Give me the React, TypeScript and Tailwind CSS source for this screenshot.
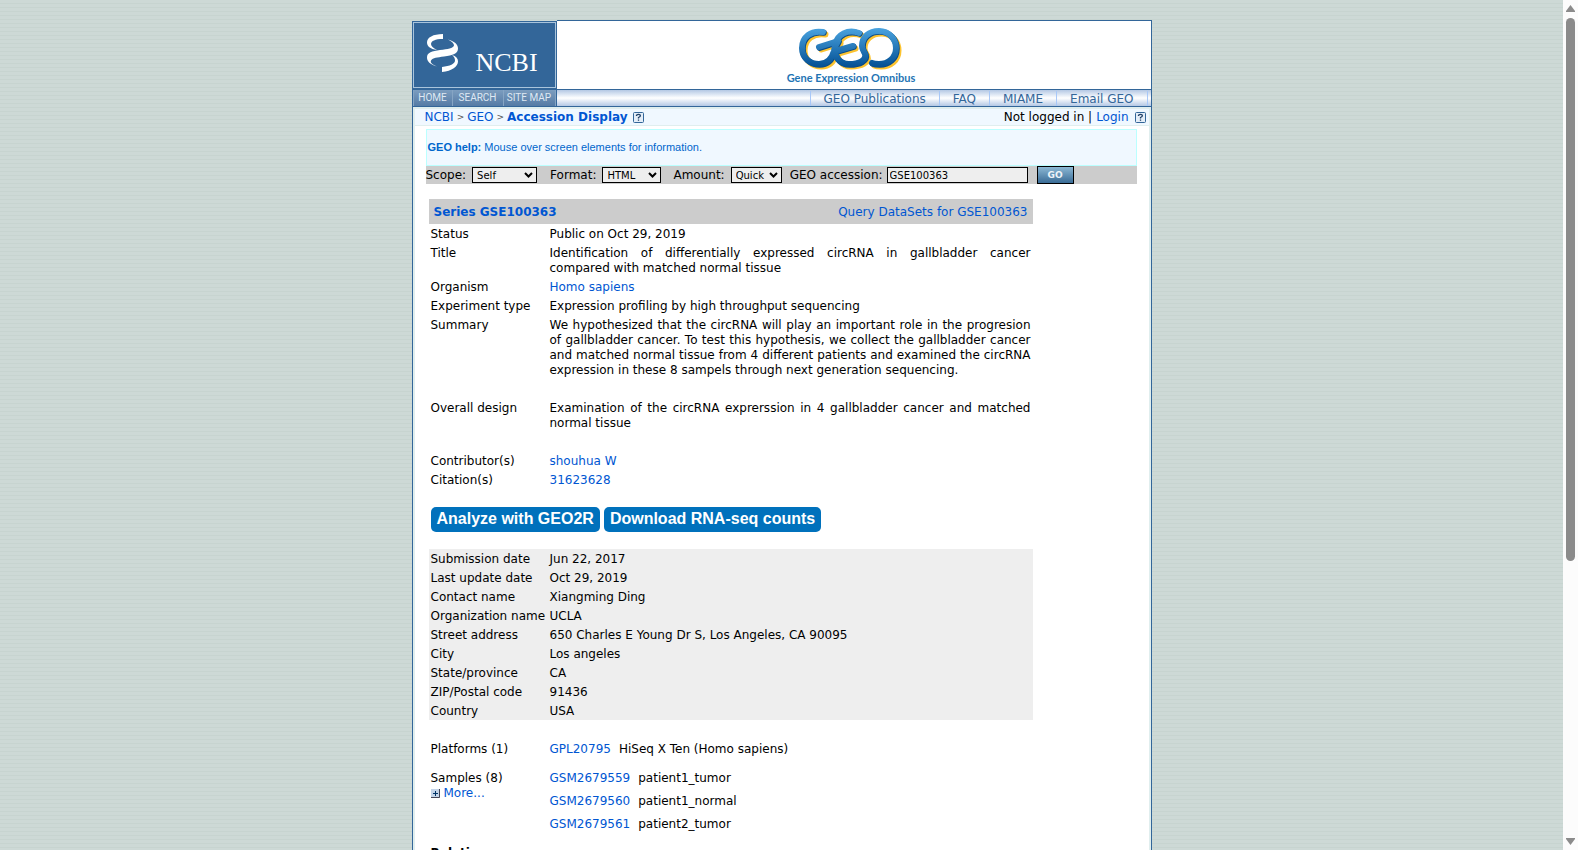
import React from "react";

const link = "text-[#0056d2] hover:underline";

const SERIES_ROWS: { label: string; value: React.ReactNode; gap?: boolean }[] = [
  { label: "Status", value: "Public on Oct 29, 2019" },
  { label: "Title", value: "Identification of differentially expressed circRNA in gallbladder cancer compared with matched normal tissue" },
  { label: "Organism", value: <a href="#organism" className={link}>Homo sapiens</a> },
  { label: "Experiment type", value: "Expression profiling by high throughput sequencing" },
  {
    label: "Summary",
    value: "We hypothesized that the circRNA will play an important role in the progresion of gallbladder cancer. To test this hypothesis, we collect the gallbladder cancer and matched normal tissue from 4 different patients and examined the circRNA expression in these 8 sampels through next generation sequencing.",
    gap: true,
  },
  { label: "Overall design", value: "Examination of the circRNA exprerssion in 4 gallbladder cancer and matched normal tissue", gap: true },
  { label: "Contributor(s)", value: <a href="#contributor" className={link}>shouhua W</a> },
  { label: "Citation(s)", value: <a href="#citation" className={link}>31623628</a> },
];

const CONTACT_ROWS = [
  ["Submission date", "Jun 22, 2017"],
  ["Last update date", "Oct 29, 2019"],
  ["Contact name", "Xiangming Ding"],
  ["Organization name", "UCLA"],
  ["Street address", "650 Charles E Young Dr S, Los Angeles, CA 90095"],
  ["City", "Los angeles"],
  ["State/province", "CA"],
  ["ZIP/Postal code", "91436"],
  ["Country", "USA"],
];

const SAMPLES = [
  ["GSM2679559", "patient1_tumor"],
  ["GSM2679560", "patient1_normal"],
  ["GSM2679561", "patient2_tumor"],
];

function HelpIcon() {
  return (
    <svg width="11" height="11" viewBox="0 0 11 11" className="shrink-0">
      <rect x="0.5" y="0.5" width="10" height="10" rx="1" fill="#e4eef8" stroke="#336699" />
      <path d="M3.5 4V3.4Q3.6 2.4 5.5 2.4T7.4 3.8Q7.4 4.8 5.5 5.5V6.6M5.5 7.6V8.8" fill="none" stroke="#1f3f66" strokeWidth="1.3" />
    </svg>
  );
}

function HelixMark() {
  return (
    <svg width="33" height="38" viewBox="0 0 33 38" fill="#fff" className="mb-1">
      <path d="M17 0v5C9 5 5 7 5 10c0 2 2 4 6 6C4 15 1 12 1 8.500 1 3.500 7 0 17 0z" />
      <path d="M22 5.500c7 2 10 5 10 9 0 5-5 7-14 8-7 1-11 1-13 4-1 2 1 4 6 6-7-2-10-5-10-9 0-5 5-6.500 13-7.500 8-1 13-1.500 14-4.500 0-2-2-4-6-6z" />
      <path d="M26 21c4 1 6 3.500 6 6.500 0 5-6 9.500-16 10.500v-5c8-1 13-3 13-6.500 0-2-1-4-3-5.500z" />
    </svg>
  );
}

function GeoLetters() {
  return (
    <>
      <path d="M24 4C12 2 3 9 3 20C3 30 11 36 20 36C29 36 33 30 35 23C36 19 37 16 39 13L20 19" />
      <path d="M60 5C49 1 38 6 36 17C34 28 40 36 50 36C60 36 68 32 66 26C65 23 63 22 63 18C63 9 70 3 80 3C90 3 97 11 97 20C97 30 89 36 80 36C77 36 75 36 73 35" />
      <path d="M37 23L54 18" />
    </>
  );
}

function GeoLogo() {
  return (
    <svg width="140" height="58" viewBox="0 0 140 58" role="img" aria-label="GEO">
      <defs>
        <linearGradient id="geo" gradientUnits="userSpaceOnUse" x1="0" y1="0" x2="0" y2="38">
          <stop offset="0" stopColor="#4aa3df" />
          <stop offset="1" stopColor="#055296" />
        </linearGradient>
      </defs>
      <g transform="translate(18 1)" fill="none" strokeWidth="6" strokeLinecap="round" strokeLinejoin="round">
        <g transform="translate(2.500 2.500)" stroke="#fcc32f"><GeoLetters /></g>
        <g transform="translate(0.800 0.800)" stroke="#0a4a85"><GeoLetters /></g>
        <g stroke="url(#geo)"><GeoLetters /></g>
      </g>
      <text x="70" y="55" textAnchor="middle" fontFamily="Lato, sans-serif" fontSize="11" fontWeight="700" fill="#1f74b4">
        Gene Expression Omnibus
      </text>
    </svg>
  );
}

function Select({ id, label, value, width }: { id: string; label: string; value: string; width: string }) {
  return (
    <div className="flex items-center gap-1.5">
      <label htmlFor={id}>{label}</label>
      <div className="relative flex">
        <select id={id} className={`h-4 appearance-none border border-black bg-[#eee] pl-1 pt-px text-[10px] leading-3 text-black ${width}`}>
          <option>{value}</option>
        </select>
        <svg width="9" height="6" viewBox="0 0 9 6" className="pointer-events-none absolute right-1 top-[5px]">
          <path d="M1 1l3.500 3.500L8 1" fill="none" stroke="#000" strokeWidth="2" />
        </svg>
      </div>
    </div>
  );
}

function Header() {
  return (
    <header>
      <div className="flex">
        <div className="mt-px w-[145px] border border-[#336699] bg-[#336699]">
          <a href="#ncbi" className="flex h-[66px] items-center gap-[17px] border border-[#a9c4dc] pl-3 text-white">
            <HelixMark />
            <span className="mt-4 font-['Liberation_Serif',serif] text-[26px] leading-7">NCBI</span>
          </a>
        </div>
        <div className="flex h-[70px] flex-1 justify-center border-t border-r border-b border-[#336699] bg-white pr-1.5 pt-1.5">
          <a href="#geo"><GeoLogo /></a>
        </div>
      </div>
      <div className="flex h-[17px] border-b border-[#336699]">
        <nav className="flex w-[145px] border-x border-[#336699] bg-linear-to-b from-[#7c9dbf] to-[#557ba5] font-[Roboto,sans-serif] text-[10px] leading-4 text-[#dfe9f3]">
          <a href="#home" className="flex-1 border-l border-[#86a5c4] text-center">HOME</a>
          <a href="#search" className="w-13 border-x border-[#86a5c4] text-center">SEARCH</a>
          <a href="#map" className="w-13 border-r border-[#86a5c4] text-center">SITE MAP</a>
        </nav>
        <nav className="flex flex-1 justify-end border-r border-[#336699] bg-linear-to-b from-[#b4c8e4] via-white to-[#b4c8e4] pt-px leading-4 text-[#336699]">
          <a href="#pubs" className="border-l border-[#a8c8f8] px-[13px]">GEO Publications</a>
          <a href="#faq" className="border-l border-[#a8c8f8] px-[13px]">FAQ</a>
          <a href="#miame" className="border-l border-[#a8c8f8] px-[13px]">MIAME</a>
          <a href="#email" className="border-x border-[#a8c8f8] px-[13px]">Email GEO</a>
          <span className="w-[3px]" />
        </nav>
      </div>
    </header>
  );
}

export default function App() {
  return (
    <div className="flex h-screen overflow-hidden bg-[repeating-linear-gradient(to_bottom,#cdd9d6_0px,#cdd9d6_3px,#c7d4d0_3px,#c7d4d0_4px)] font-['DejaVu_Sans',Verdana,sans-serif] text-xs leading-[15px] text-black">
      <main className="flex-1 overflow-hidden pt-5">
        <div className="mx-auto w-[740px]">
          <Header />
          <div className="border-x border-[#336699] bg-white">
            <div className="border-2 border-b-0 border-[#e0eeee]">
              <div className="flex h-[17px] items-end justify-between border-b border-[#e0eeee] bg-[#f0f8ff] pl-2.5 pr-[3px]">
                <div className="flex items-center gap-[3px]">
                  <a href="#ncbi" className={link}>NCBI</a>
                  <span className="text-[9px] text-[#555]">&gt;</span>
                  <a href="#geo" className={link}>GEO</a>
                  <span className="text-[9px] text-[#555]">&gt;</span>
                  <a href="#acc" className={`mr-0.5 font-bold ${link}`}>Accession Display</a>
                  <HelpIcon />
                </div>
                <div className="flex items-center gap-1">
                  <span>Not logged in |</span>
                  <a href="#login" className={`mr-0.5 ${link}`}>Login</a>
                  <HelpIcon />
                </div>
              </div>

              <div className="ml-[11px] mr-3 mt-[3px]">
                <div className="flex h-[37px] items-center border border-[#bff] bg-[#f0f8ff] pl-px font-['Liberation_Sans',sans-serif] text-[11px] text-[#0066cc]">
                  <p><b>GEO help:</b> Mouse over screen elements for information.</p>
                </div>
                <form className="flex h-[18px] items-center bg-[#ccc]">
                  <Select id="scope" label="Scope:" value="Self" width="w-[65px]" />
                  <span className="w-[13px]" />
                  <Select id="format" label="Format:" value="HTML" width="w-[59px]" />
                  <span className="w-3" />
                  <Select id="amount" label="Amount:" value="Quick" width="w-[51px]" />
                  <label htmlFor="acc" className="ml-2">GEO accession:</label>
                  <input id="acc" defaultValue="GSE100363" className="ml-1 h-4 w-[141px] border border-black bg-[#eee] px-0.5 pt-px text-[10px]" />
                  <button type="button" className="ml-[9px] h-[18px] w-[37px] border border-black bg-linear-to-b from-[#8cb8d4] to-[#3a6c96] text-[9px] font-bold leading-4 text-[#eef4f9]">GO</button>
                </form>
              </div>

              <div className="ml-3.5 mt-[15px] w-[604px]">
                <div className="flex h-[25px] items-center justify-between bg-[#ccc] px-[5px] pt-px">
                  <a href="#series" className={`font-bold ${link}`}>Series GSE100363</a>
                  <a href="#query" className={link}>Query DataSets for GSE100363</a>
                </div>
                <table className="w-full table-fixed">
                  <tbody>
                    {SERIES_ROWS.map((r) => (
                      <tr key={r.label} className="align-top">
                        <th scope="row" className="w-[119px] px-0.5 pb-px pt-[3px] text-left font-normal">{r.label}</th>
                        <td className={`px-0.5 pt-[3px] text-justify ${r.gap ? "pb-5" : "pb-px"}`}>{r.value}</td>
                      </tr>
                    ))}
                  </tbody>
                </table>

                <div className="ml-0.5 mt-[18px] flex gap-1 font-['Liberation_Sans',sans-serif] text-base font-bold leading-[23px] text-white">
                  <button type="button" className="rounded-[5px] bg-[#0071bc] px-1.5 pb-0.5">Analyze with GEO2R</button>
                  <button type="button" className="rounded-[5px] bg-[#0071bc] px-1.5 pb-0.5">Download RNA-seq counts</button>
                </div>

                <table className="mt-[17px] w-full table-fixed bg-[#eee]">
                  <tbody>
                    {CONTACT_ROWS.map(([label, value]) => (
                      <tr key={label}>
                        <th scope="row" className="w-[119px] whitespace-nowrap px-0.5 pb-px pt-[3px] text-left font-normal">{label}</th>
                        <td className="px-0.5 pb-px pt-[3px]">{value}</td>
                      </tr>
                    ))}
                  </tbody>
                </table>

                <div className="mt-[19px] flex px-0.5 pb-px pt-[3px]">
                  <div className="w-[119px]">Platforms (1)</div>
                  <div className="flex gap-2">
                    <a href="#gpl" className={link}>GPL20795</a>
                    <span>HiSeq X Ten (Homo sapiens)</span>
                  </div>
                </div>
                <div className="mt-2.5 flex px-0.5 pb-px pt-[3px]">
                  <div className="w-[119px]">
                    <div>Samples (8)</div>
                    <a href="#more" className={`flex items-center gap-1 ${link}`}>
                      <svg width="9" height="9" viewBox="0 0 9 9">
                        <path d="M0 0h9v9H0z" fill="#c4d4e8" />
                        <path d="M0 8.500h8.500V0" fill="none" stroke="#445" />
                        <path d="M4.500 2v5M2 4.500h5" stroke="#036" />
                      </svg>
                      More...
                    </a>
                  </div>
                  <table>
                    <tbody>
                      {SAMPLES.map(([id, name]) => (
                        <tr key={id}>
                          <td className="pb-2 pr-2"><a href={`#${id}`} className={link}>{id}</a></td>
                          <td className="pb-2">{name}</td>
                        </tr>
                      ))}
                    </tbody>
                  </table>
                </div>
                <h2 className="mt-0.5 px-0.5 pb-px pt-[3px] font-bold">Relations</h2>
              </div>
              <div className="h-60" />
            </div>
          </div>
        </div>
      </main>

      <div className="flex w-[15px] flex-col items-center bg-[#fcfcfc] py-[5px]" aria-hidden="true">
        <svg width="9" height="7" viewBox="0 0 9 7" className="shrink-0"><path d="M4.500 0L9 6v1H0V6z" fill="#8b8b8b" /></svg>
        <div className="mt-1.5 w-[9px] flex-[55] rounded-full bg-[#8b8b8b]" />
        <div className="flex-[28]" />
        <svg width="9" height="7" viewBox="0 0 9 7" className="shrink-0"><path d="M4.500 7L9 1V0H0v1z" fill="#8b8b8b" /></svg>
      </div>
    </div>
  );
}
